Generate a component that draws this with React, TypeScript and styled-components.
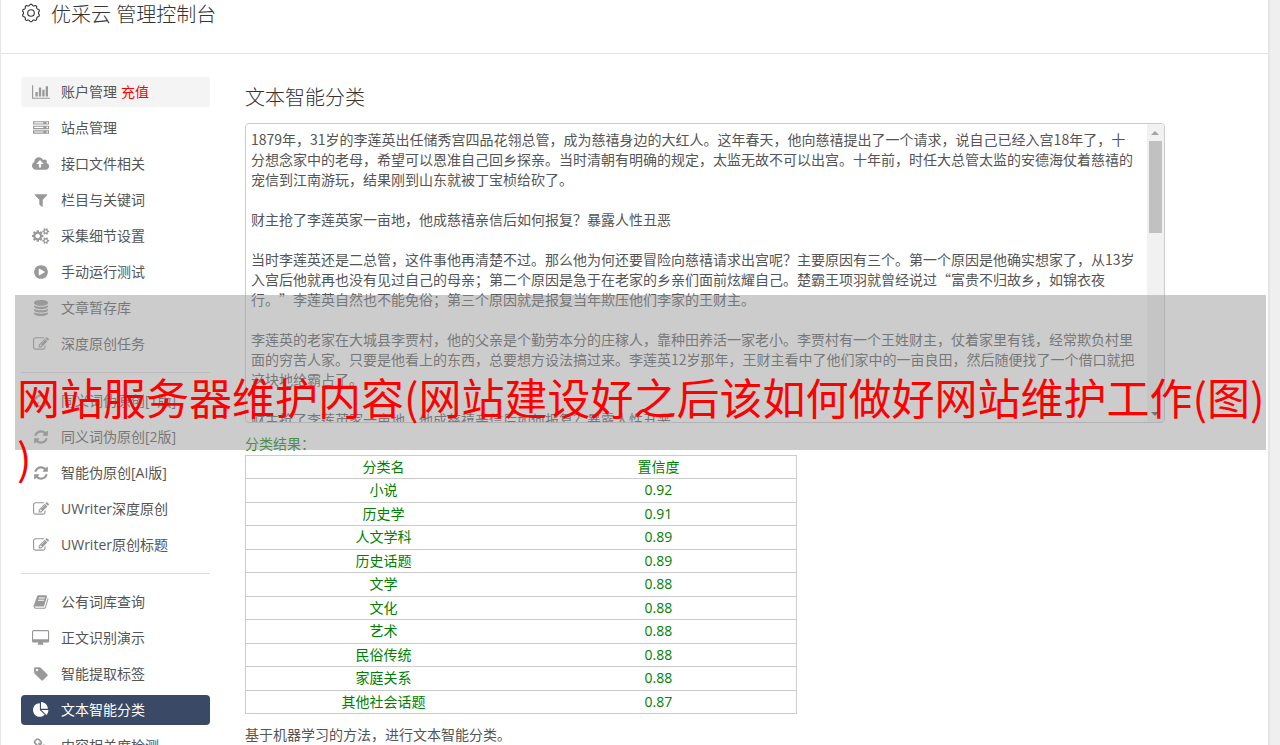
import React from "react";
import styled, { createGlobalStyle, css } from "styled-components";

const GlobalStyle = createGlobalStyle`
  * { box-sizing: border-box; }
  html { background: #efefef; }
  body {
    margin: 0;
    color: #555;
    font: 14px/20px "Open Sans", "Noto Sans CJK SC", sans-serif;
    font-weight: 400;
  }
  html, body, #root { height: 100%; }
  body { overflow: hidden; }
`;

const Page = styled.div`
  position: relative;
  height: 100%;
  overflow: hidden;
  margin-right: 10px;
  background: #fff;
  border-left: 1px solid #e5e5e5;
  border-right: 2px solid #e5e5e5;
`;

const Header = styled.header`
  display: flex;
  align-items: flex-start;
  gap: 10px;
  height: 54px;
  padding-left: 20px;
  border-bottom: 1px solid #e5e5e5;
  color: #333;

  svg {
    width: 20px;
    height: 20px;
    margin-top: 3px;
  }
`;

const Title = styled.h1`
  margin: 0;
  font-size: 20px;
  line-height: 30px;
  font-weight: 300;
`;

const Body = styled.div`
  display: flex;
  padding: 23px 1px 0 20px;
`;

const Sidebar = styled.nav`
  flex: 0 0 189px;
  margin-right: 35px;
`;

const Group = styled.ul`
  display: grid;
  gap: 6px;
  margin: 0;
  padding: 0;
  list-style: none;

  & + & {
    margin-top: 13px;
    padding-top: 13px;
    border-top: 1px solid #ddd;
  }
`;

const NavLink = styled.a<{ $state?: "hover" | "active" }>`
  display: flex;
  align-items: center;
  height: 30px;
  padding-left: 10px;
  border-radius: 4px;
  color: #555;
  text-decoration: none;
  white-space: nowrap;
  ${(p) => p.$state === "hover" && css`background: #f4f4f4;`}
  ${(p) => p.$state === "active" && css`background: #3a4a66; color: #fff;`}
`;

const IconSlot = styled.span<{ $active: boolean }>`
  display: flex;
  justify-content: center;
  width: 20px;
  margin-right: 10px;
  color: ${(p) => (p.$active ? "#fff" : "#999")};

  svg {
    height: 16px;
  }
`;

const Recharge = styled.span`
  margin-left: 4px;
  color: #f00;
`;

const Main = styled.main`
  flex: 1;
  min-width: 0;
`;

const SectionTitle = styled.h2`
  margin: 0 0 10px;
  padding-top: 6px;
  color: #333;
  font-size: 20px;
  line-height: 30px;
  font-weight: 300;
`;

const Editor = styled.div`
  display: flex;
  width: 90%;
  height: 300px;
  overflow: hidden;
  border: 1px solid #ccc;
  border-radius: 4px;
  background: #fff;
`;

const Article = styled.textarea`
  flex: 1;
  min-width: 0;
  padding: 5px 9px 5px 5px;
  border: 0;
  background: transparent;
  color: #555;
  font: 14px/20px "Noto Sans CJK SC", sans-serif;
  text-spacing-trim: space-all;
  resize: none;
  outline: none;
  scrollbar-width: none;
`;

const ScrollTrack = styled.div`
  display: flex;
  flex-direction: column;
  align-items: center;
  width: 17px;
  background: #f1f1f1;
`;

const ScrollArrow = styled.span<{ $down?: boolean }>`
  display: flex;
  align-items: center;
  justify-content: center;
  height: 17px;
  ${(p) => p.$down && css`margin-top: auto;`}

  &::before {
    content: "";
    border: 4px solid transparent;
    border-top-width: 0;
    border-bottom-color: #a3a3a3;
    ${(p) => p.$down && css`
      transform: rotate(180deg);
      border-bottom-color: #505050;
    `}
  }
`;

const ScrollThumb = styled.span`
  width: 13px;
  height: 92px;
  background: #c1c1c1;
`;

const Results = styled.table`
  width: 54%;
  height: 259px;
  border-collapse: collapse;
  color: #008000;
  text-align: center;

  caption {
    padding: 11px 0 1px;
    text-align: left;
  }
  tr {
    border: 1px solid #ccc;
  }
  th, td {
    width: 50%;
    height: 23px;
    padding: 0;
    font-weight: 400;
  }
`;

const Note = styled.p`
  margin: 11px 0 0;
`;

const Banner = styled.div`
  position: absolute;
  top: 295px;
  left: 14px;
  right: 2px;
  height: 155px;
  padding: 71px 0 0 2px;
  background: rgba(153, 153, 153, 0.5);
  color: #f00;
  font: 43px/60px "Noto Sans CJK SC", sans-serif;
  word-break: break-all;
  line-break: anywhere;
`;

type Glyph = { box: string; d: string };

const square = "0 0 1792 1792";
const wide = "-64 0 1920 1792";

const glyphs: Record<string, Glyph> = {
  chart: {
    box: "0 0 2048 1792",
    d: "M640 896v512h-256v-512h256zm384-512v1024h-256v-1024h256zm1024 1152v128h-2048v-1536h128v1408h1920zm-640-896v768h-256v-768h256zm384-384v1152h-256v-1152h256z",
  },
  server: {
    box: square,
    d: "M128 1408h1024v-128h-1024v128zm0-512h1024v-128h-1024v128zm1568 448q0-40-28-68t-68-28-68 28-28 68 28 68 68 28 68-28 28-68zm-1568-960h1024v-128h-1024v128zm1568 448q0-40-28-68t-68-28-68 28-28 68 28 68 68 28 68-28 28-68zm0-512q0-40-28-68t-68-28-68 28-28 68 28 68 68 28 68-28 28-68zm96 832v384h-1792v-384h1792zm0-512v384h-1792v-384h1792zm0-512v384h-1792v-384h1792z",
  },
  upload: {
    box: wide,
    d: "M1216 864q0-14-9-23l-352-352q-9-9-23-9t-23 9l-351 351q-10 12-10 24 0 14 9 23t23 9h224v352q0 13 9.5 22.5t22.5 9.5h192q13 0 22.5-9.5t9.5-22.5v-352h224q13 0 22.5-9.5t9.5-22.5zm640 288q0 159-112.5 271.5t-271.5 112.5h-1088q-185 0-316.5-131.5t-131.5-316.5q0-130 70-240t188-165q-2-30-2-43 0-212 150-362t362-150q156 0 285.5 87t188.5 231q71-62 166-62 106 0 181 75t75 181q0 76-41 138 130 31 213.5 135.5t83.5 238.5z",
  },
  filter: {
    box: square,
    d: "M1595 295q17 41-14 70l-493 493v742q0 42-39 59-13 5-25 5-27 0-45-19l-256-256q-19-19-19-45v-486l-493-493q-31-29-14-70 17-39 59-39h1280q42 0 59 39z",
  },
  cogs: {
    box: wide,
    d: "M832 896q0-106-75-181t-181-75-181 75-75 181 75 181 181 75 181-75 75-181zm768 512q0-52-38-90t-90-38-90 38-38 90q0 53 37.5 90.5t90.5 37.5 90.5-37.5 37.5-90.5zm0-1024q0-52-38-90t-90-38-90 38-38 90q0 53 37.5 90.5t90.5 37.5 90.5-37.5 37.5-90.5zm-384 421v185q0 10-7 19.5t-16 10.5l-155 24q-11 35-32 76 34 48 90 115 7 11 7 20 0 12-7 19-23 30-82.5 89.5t-78.5 59.5q-11 0-21-7l-115-90q-37 19-77 31-11 108-23 155-7 24-30 24h-186q-11 0-20-7.5t-10-17.5l-23-153q-34-10-75-31l-118 89q-7 7-20 7-11 0-21-8-144-133-144-160 0-9 7-19 10-14 41-53t47-61q-23-44-35-82l-152-24q-10-1-17-9.5t-7-19.5v-185q0-10 7-19.5t16-10.5l155-24q11-35 32-76-34-48-90-115-7-11-7-20 0-12 7-20 22-30 82-89t79-59q11 0 21 7l115 90q34-18 77-32 11-108 23-154 7-24 30-24h186q11 0 20 7.5t10 17.5l23 153q34 10 75 31l118-89q8-7 20-7 11 0 21 8 144 133 144 160 0 8-7 19-12 16-42 54t-45 60q23 48 34 82l152 23q10 2 17 10.5t7 19.5zm640 533v140q0 16-149 31-12 27-30 52 51 113 51 138 0 4-4 7-122 71-124 71-8 0-46-47t-52-68q-20 2-30 2t-30-2q-14 21-52 68t-46 47q-2 0-124-71-4-3-4-7 0-25 51-138-18-25-30-52-149-15-149-31v-140q0-16 149-31 13-29 30-52-51-113-51-138 0-4 4-7 4-2 35-20t59-34 30-16q8 0 46 46.5t52 67.5q20-2 30-2t30 2q51-71 92-112l6-2q4 0 124 70 4 3 4 7 0 25-51 138 17 23 30 52 149 15 149 31zm0-1024v140q0 16-149 31-12 27-30 52 51 113 51 138 0 4-4 7-122 71-124 71-8 0-46-47t-52-68q-20 2-30 2t-30-2q-14 21-52 68t-46 47q-2 0-124-71-4-3-4-7 0-25 51-138-18-25-30-52-149-15-149-31v-140q0-16 149-31 13-29 30-52-51-113-51-138 0-4 4-7 4-2 35-20t59-34 30-16q8 0 46 46.5t52 67.5q20-2 30-2t30 2q51-71 92-112l6-2q4 0 124 70 4 3 4 7 0 25-51 138 17 23 30 52 149 15 149 31z",
  },
  play: {
    box: square,
    d: "M896 128q209 0 385.5 103t279.5 279.5 103 385.5-103 385.5-279.5 279.5-385.5 103-385.5-103-279.5-279.5-103-385.5 103-385.5 279.5-279.5 385.5-103zm384 823q32-18 32-55t-32-55l-544-320q-31-19-64-1-32 19-32 56v640q0 37 32 56 16 8 32 8 17 0 32-9z",
  },
  database: {
    box: square,
    d: "M896 768q237 0 443-43t325-127v170q0 69-103 128t-280 93.5-385 34.5-385-34.5-280-93.5-103-128v-170q119 84 325 127t443 43zm0 768q237 0 443-43t325-127v170q0 69-103 128t-280 93.5-385 34.5-385-34.5-280-93.5-103-128v-170q119 84 325 127t443 43zm0-384q237 0 443-43t325-127v170q0 69-103 128t-280 93.5-385 34.5-385-34.5-280-93.5-103-128v-170q119 84 325 127t443 43zm0-1152q208 0 385 34.5t280 93.5 103 128v128q0 69-103 128t-280 93.5-385 34.5-385-34.5-280-93.5-103-128v-128q0-69 103-128t280-93.5 385-34.5z",
  },
  edit: {
    box: square,
    d: "M888 1184l116-116-152-152-116 116v56h96v96h56zm440-720q-16-16-33 1l-350 350q-17 17-1 33t33-1l350-350q17-17 1-33zm80 594v190q0 119-84.5 203.5t-203.5 84.5h-832q-119 0-203.5-84.5t-84.5-203.5v-832q0-119 84.5-203.5t203.5-84.5h832q63 0 117 25 15 7 18 23 3 17-9 29l-49 49q-14 14-32 8-23-6-45-6h-832q-66 0-113 47t-47 113v832q0 66 47 113t113 47h832q66 0 113-47t47-113v-126q0-13 9-22l64-64q15-15 35-7t20 29zm-96-738l288 288-672 672h-288v-288zm444 132l-92 92-288-288 92-92q28-28 68-28t68 28l152 152q28 28 28 68t-28 68z",
  },
  refresh: {
    box: square,
    d: "M1639 1056q0 5-1 7-64 268-268 434.5t-478 166.5q-146 0-282.5-55t-243.5-157l-129 129q-19 19-45 19t-45-19-19-45v-448q0-26 19-45t45-19h448q26 0 45 19t19 45-19 45l-137 137q71 66 161 102t187 36q134 0 250-65t186-179q11-17 53-117 8-23 30-23h192q13 0 22.5 9.5t9.5 22.5zm25-800v448q0 26-19 45t-45 19h-448q-26 0-45-19t-19-45 19-45l138-138q-148-137-349-137-134 0-250 65t-186 179q-11 17-53 117-8 23-30 23h-199q-13 0-22.5-9.5t-9.5-22.5v-7q65-268 270-434.5t480-166.5q146 0 284 55.5t245 156.5l130-129q19-19 45-19t45 19 19 45z",
  },
  book: {
    box: square,
    d: "M1703 478q40 57 18 129l-275 906q-19 64-76.5 107.5t-122.5 43.5h-923q-77 0-148.5-53.5t-99.5-131.5q-24-67-2-127 0-4 3-27t4-37q1-8-3-21.5t-3-19.5q2-11 8-21t16.5-23.5 16.5-23.5q23-38 45-91.5t30-91.5q3-10 .5-30t-.5-28q3-11 17-28t17-23q21-36 42-92t25-90q1-9-2.5-32t.5-28q4-13 22-30.5t22-22.5q19-26 42.5-84.5t27.5-96.5q1-8-3-25.5t-2-26.5q2-8 9-18t18-23 17-21q8-12 16.5-30.5t15-35 16-36 19.5-32 26.5-23.5 36-11.5 47.5 5.5l-1 3q38-9 51-9h761q74 0 114 56t18 130l-274 906q-36 119-71.5 153.5t-128.5 34.5h-869q-27 0-38 15-11 16-1 43 24 70 144 70h923q29 0 56-15.5t35-41.5l300-987q7-22 5-57 38 15 59 43zm-1064 2q-4 13 2 22.5t20 9.5h608q13 0 25.5-9.5t16.5-22.5l21-64q4-13-2-22.5t-20-9.5h-608q-13 0-25.5 9.5t-16.5 22.5zm-83 256q-4 13 2 22.5t20 9.5h608q13 0 25.5-9.5t16.5-22.5l21-64q4-13-2-22.5t-20-9.5h-608q-13 0-25.5 9.5t-16.5 22.5z",
  },
  desktop: {
    box: wide,
    d: "M1728 992v-832q0-13-9.5-22.5t-22.5-9.5h-1600q-13 0-22.5 9.5t-9.5 22.5v832q0 13 9.5 22.5t22.5 9.5h1600q13 0 22.5-9.5t9.5-22.5zm128-832v1088q0 66-47 113t-113 47h-544q0 37 16 77.5t32 71 16 43.5q0 26-19 45t-45 19h-512q-26 0-45-19t-19-45q0-14 16-44t32-70 16-78h-544q-66 0-113-47t-47-113v-1088q0-66 47-113t113-47h1600q66 0 113 47t47 113z",
  },
  tag: {
    box: square,
    d: "M576 448q0-53-37.5-90.5t-90.5-37.5-90.5 37.5-37.5 90.5 37.5 90.5 90.5 37.5 90.5-37.5 37.5-90.5zm1067 576q0 53-37 90l-491 492q-39 37-91 37-53 0-90-37l-715-716q-38-37-64.5-101t-26.5-117v-416q0-52 38-90t90-38h416q53 0 117 26.5t102 64.5l715 714q37 39 37 91z",
  },
  pie: {
    box: square,
    d: "M768 890l546 546q-106 108-247.5 168t-298.5 60q-209 0-385.5-103t-279.5-279.5-103-385.5 103-385.5 279.5-279.5 385.5-103v762zm187 6h773q0 157-60 298.5t-168 247.5zm709-128h-768v-768q209 0 385.5 103t279.5 279.5 103 385.5z",
  },
  link: {
    box: square,
    d: "M1520 1216q0-40-28-68l-208-208q-28-28-68-28-42 0-72 32 3 3 19 18.5t21.5 21.5 15 19 13 25.5 3.5 27.5q0 40-28 68t-68 28q-15 0-27.5-3.5t-25.5-13-19-15-21.5-21.5-18.5-19q-33 31-33 73 0 40 28 68l206 207q27 27 68 27 40 0 68-26l147-146q28-28 28-67zm-703-705q0-40-28-68l-206-207q-28-28-68-28-39 0-68 27l-147 146q-28 28-28 67 0 40 28 68l208 208q27 27 68 27 42 0 72-31-3-3-19-18.5t-21.5-21.5-15-19-13-25.5-3.5-27.5q0-40 28-68t68-28q15 0 27.5 3.5t25.5 13 19 15 21.5 21.5 18.5 19q33-31 33-73zm895 705q0 120-85 203l-147 146q-83 83-203 83-121 0-204-85l-206-207q-83-83-83-203 0-123 88-209l-88-88q-86 88-208 88-120 0-204-84l-208-208q-84-84-84-204t85-203l147-146q83-83 203-83 121 0 204 85l206 207q83 83 83 203 0 123-88 209l88 88q86-88 208-88 120 0 204 84l208 208q84 84 84 204z",
  },
};

const Icon = ({ name }: { name: string }) => (
  <svg viewBox={glyphs[name].box} fill="currentColor" aria-hidden="true">
    <path d={glyphs[name].d} />
  </svg>
);

const gearPoints = Array.from({ length: 120 }, (_, i) => {
  const a = (i / 120) * Math.PI * 2;
  const r = 8.1 + 0.6 * Math.tanh(2 * Math.cos(a * 10));
  return `${(10 + r * Math.sin(a)).toFixed(2)},${(10 - r * Math.cos(a)).toFixed(2)}`;
}).join(" ");

const GearIcon = () => (
  <svg viewBox="0 0 20 20" fill="none" stroke="currentColor" strokeWidth="1.1" aria-hidden="true">
    <polygon points={gearPoints} strokeLinejoin="round" />
    <circle cx="10" cy="10" r="3.3" />
  </svg>
);

type Item = { icon: string; label: string; state?: "hover" | "active"; extra?: string };

const groups: Item[][] = [
  [
    { icon: "chart", label: "账户管理", state: "hover", extra: "充值" },
    { icon: "server", label: "站点管理" },
    { icon: "upload", label: "接口文件相关" },
    { icon: "filter", label: "栏目与关键词" },
    { icon: "cogs", label: "采集细节设置" },
    { icon: "play", label: "手动运行测试" },
    { icon: "database", label: "文章暂存库" },
    { icon: "edit", label: "深度原创任务" },
  ],
  [
    { icon: "refresh", label: "同义词伪原创[1版]" },
    { icon: "refresh", label: "同义词伪原创[2版]" },
    { icon: "refresh", label: "智能伪原创[AI版]" },
    { icon: "edit", label: "UWriter深度原创" },
    { icon: "edit", label: "UWriter原创标题" },
  ],
  [
    { icon: "book", label: "公有词库查询" },
    { icon: "desktop", label: "正文识别演示" },
    { icon: "tag", label: "智能提取标签" },
    { icon: "pie", label: "文本智能分类", state: "active" },
    { icon: "link", label: "内容相关度检测" },
  ],
];

const article = `1879年，31岁的李莲英出任储秀宫四品花翎总管，成为慈禧身边的大红人。这年春天，他向慈禧提出了一个请求，说自己已经入宫18年了，十分想念家中的老母，希望可以恩准自己回乡探亲。当时清朝有明确的规定，太监无故不可以出宫。十年前，时任大总管太监的安德海仗着慈禧的宠信到江南游玩，结果刚到山东就被丁宝桢给砍了。

财主抢了李莲英家一亩地，他成慈禧亲信后如何报复？暴露人性丑恶

当时李莲英还是二总管，这件事他再清楚不过。那么他为何还要冒险向慈禧请求出宫呢？主要原因有三个。第一个原因是他确实想家了，从13岁入宫后他就再也没有见过自己的母亲；第二个原因是急于在老家的乡亲们面前炫耀自己。楚霸王项羽就曾经说过“富贵不归故乡，如锦衣夜行。”李莲英自然也不能免俗；第三个原因就是报复当年欺压他们李家的王财主。

李莲英的老家在大城县李贾村，他的父亲是个勤劳本分的庄稼人，靠种田养活一家老小。李贾村有一个王姓财主，仗着家里有钱，经常欺负村里面的穷苦人家。只要是他看上的东西，总要想方设法搞过来。李莲英12岁那年，王财主看中了他们家中的一亩良田，然后随便找了一个借口就把这块地给霸占了。

财主抢了李莲英家一亩地，他成慈禧亲信后如何报复？暴露人性丑恶`;

const results: [string, string][] = [
  ["小说", "0.92"],
  ["历史学", "0.91"],
  ["人文学科", "0.89"],
  ["历史话题", "0.89"],
  ["文学", "0.88"],
  ["文化", "0.88"],
  ["艺术", "0.88"],
  ["民俗传统", "0.88"],
  ["家庭关系", "0.88"],
  ["其他社会话题", "0.87"],
];

export default function App() {
  return (
    <>
      <GlobalStyle />
      <Page lang="zh-CN">
        <Header>
          <GearIcon />
          <Title>优采云 管理控制台</Title>
        </Header>
        <Body>
          <Sidebar>
            {groups.map((items, g) => (
              <Group key={g}>
                {items.map((item) => (
                  <li key={item.label}>
                    <NavLink href="#" $state={item.state}>
                      <IconSlot $active={item.state === "active"}>
                        <Icon name={item.icon} />
                      </IconSlot>
                      {item.label}
                      {item.extra && <Recharge>{item.extra}</Recharge>}
                    </NavLink>
                  </li>
                ))}
              </Group>
            ))}
          </Sidebar>
          <Main>
            <SectionTitle id="classify">文本智能分类</SectionTitle>
            <Editor>
              <Article aria-labelledby="classify" spellCheck={false} defaultValue={article} />
              <ScrollTrack aria-hidden="true">
                <ScrollArrow />
                <ScrollThumb />
                <ScrollArrow $down />
              </ScrollTrack>
            </Editor>
            <Results>
              <caption>分类结果：</caption>
              <thead>
                <tr>
                  <th scope="col">分类名</th>
                  <th scope="col">置信度</th>
                </tr>
              </thead>
              <tbody>
                {results.map(([name, score]) => (
                  <tr key={name}>
                    <td>{name}</td>
                    <td>{score}</td>
                  </tr>
                ))}
              </tbody>
            </Results>
            <Note>基于机器学习的方法，进行文本智能分类。</Note>
          </Main>
        </Body>
        <Banner>网站服务器维护内容(网站建设好之后该如何做好网站维护工作(图))</Banner>
      </Page>
    </>
  );
}
